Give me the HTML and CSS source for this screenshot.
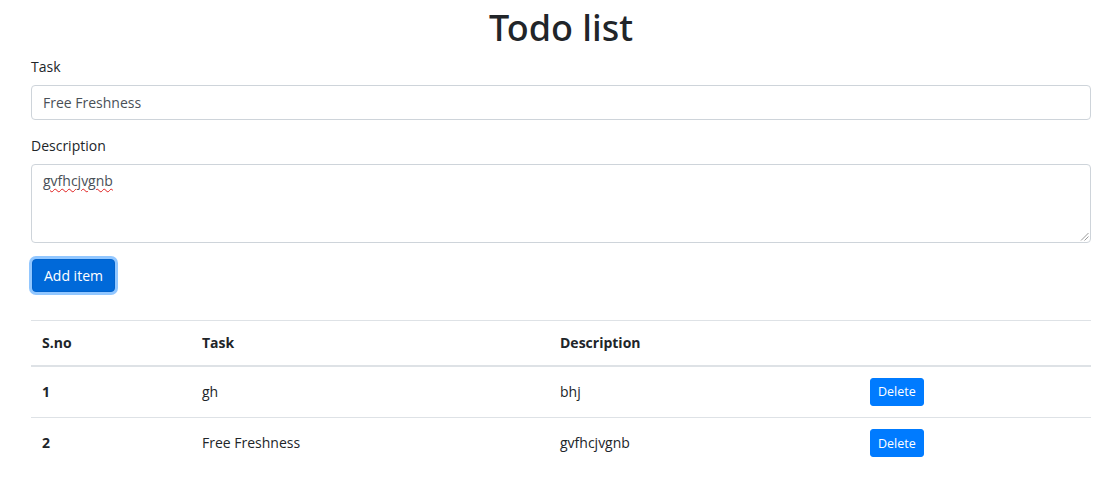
FILE: index.html
```html
<!DOCTYPE html>
<html>
<head>
<meta charset="utf-8">
<title>Todo list</title>
<link rel="stylesheet" href="styles.css">
</head>
<body>
<div class="container">
  <h1 class="title">Todo list</h1>
  <div class="form-group">
    <label class="label">Task</label>
    <div class="input">Free Freshness</div>
  </div>
  <div class="form-group">
    <label class="label">Description</label>
    <div class="textarea"><span class="misspelled">gvfhcjvgnb</span>
      <svg class="grip" width="9" height="9" viewBox="0 0 9 9"><path d="M8.5 1 L1 8.5 M8.5 4.5 L4.5 8.5" stroke="#9a9a9a" stroke-width="1" fill="none"/></svg>
    </div>
  </div>
  <button class="btn btn-primary focus">Add item</button>
  <table class="table">
    <thead>
      <tr><th class="c1">S.no</th><th class="c2">Task</th><th class="c3">Description</th><th class="c4"></th></tr>
    </thead>
    <tbody>
      <tr><th>1</th><td>gh</td><td>bhj</td><td><button class="btn btn-sm">Delete</button></td></tr>
      <tr><th>2</th><td>Free Freshness</td><td>gvfhcjvgnb</td><td><button class="btn btn-sm">Delete</button></td></tr>
    </tbody>
  </table>
</div>
</body>
</html>
```
FILE: styles.css
```css
* { box-sizing: border-box; }
body {
  margin: 0;
  font-family: "Open Sans", "Noto Sans", sans-serif;
  font-size: 14px;
  line-height: 1.5;
  color: #212529;
  background: #fff;
}
.container {
  width: 1060px;
  margin: 0 0 0 31px;
  padding: 0;
}
.title {
  margin: 0;
  padding-top: 4px;
  text-align: center;
  font-family: "Noto Sans", "Open Sans", sans-serif;
  font-size: 36px;
  font-weight: 500;
  line-height: 48px;
  height: 55px;
}
.form-group { margin-bottom: 14px; }
.label {
  display: block;
  margin-bottom: 7px;
  line-height: 23px;
  font-size: 14px;
}
.input {
  height: 35px;
  border: 1px solid #ced4da;
  border-radius: 4px;
  padding: 0 11px;
  line-height: 33px;
  color: #495057;
  font-size: 14px;
}
.textarea {
  position: relative;
  height: 79px;
  border: 1px solid #ced4da;
  border-radius: 4px;
  padding: 5px 11px;
  line-height: 22px;
  color: #495057;
  font-size: 14px;
}
.misspelled {
  text-decoration: underline wavy #e02020;
  text-decoration-thickness: 1px;
  text-underline-offset: 2px;
}
.grip { position: absolute; right: 1px; bottom: 1px; }
.btn {
  font-family: inherit;
  border: 1px solid #007bff;
  background: #007bff;
  color: #fff;
  border-radius: 4px;
  cursor: pointer;
}
.btn-primary {
  margin-top: 2px;
  margin-left: 1px;
  height: 33px;
  padding: 0 11px;
  font-size: 14px;
}
.focus {
  background: #0069d9;
  border-color: #0062cc;
  box-shadow: 0 0 0 3px rgba(38, 143, 255, 0.5);
}
.btn-sm {
  height: 28px;
  padding: 0 7px;
  font-size: 12.5px;
  border-radius: 3px;
}
.table {
  width: 100%;
  margin-top: 28px;
  border-collapse: collapse;
}
.table th, .table td {
  text-align: left;
  padding: 11px;
  border-top: 1px solid #dee2e6;
  vertical-align: middle;
  font-size: 14px;
  line-height: 22px;
}
.table th { font-weight: 700; }
.table td { font-weight: 400; }
.table thead th {
  border-bottom: 2px solid #dee2e6;
  height: 45px;
}
.table tbody tr { height: 51px; }
.table tbody tr:last-child { height: 52px; }
.table tbody td, .table tbody th { padding-top: 0; padding-bottom: 0; }
.c1 { width: 160px; }
.c2 { width: 358px; }
.c3 { width: 310px; }
.c4 { width: 232px; }
```
